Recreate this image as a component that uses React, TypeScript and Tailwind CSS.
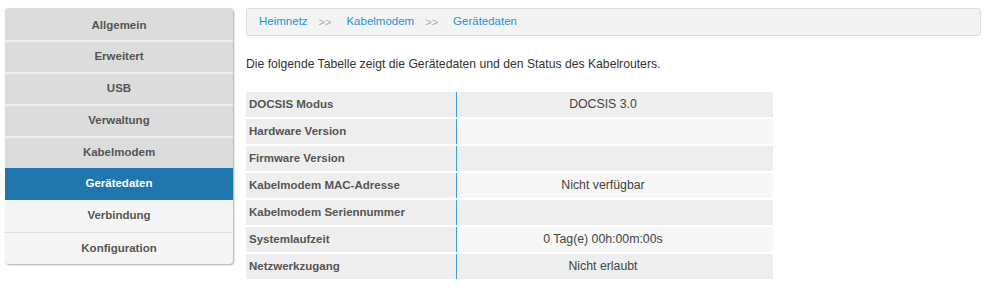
import React from 'react';

const menuItems = [
  { label: 'Allgemein', level: 0 },
  { label: 'Erweitert', level: 0 },
  { label: 'USB', level: 0 },
  { label: 'Verwaltung', level: 0 },
  { label: 'Kabelmodem', level: 0 },
  { label: 'Gerätedaten', level: 1, active: true },
  { label: 'Verbindung', level: 1 },
  { label: 'Konfiguration', level: 1 },
];

const rows = [
  { label: 'DOCSIS Modus', value: 'DOCSIS 3.0' },
  { label: 'Hardware Version', value: '' },
  { label: 'Firmware Version', value: '' },
  { label: 'Kabelmodem MAC-Adresse', value: 'Nicht verfügbar' },
  { label: 'Kabelmodem Seriennummer', value: '' },
  { label: 'Systemlaufzeit', value: '0 Tag(e) 00h:00m:00s' },
  { label: 'Netzwerkzugang', value: 'Nicht erlaubt' },
];

export default function App() {
  return (
    <div
      className="w-[998px] h-[293px] bg-white flex items-start gap-[13px] pl-[5px] pt-[8px] text-[#555]"
      style={{ fontFamily: '"Liberation Sans", Arial, sans-serif' }}
    >
      {/* Sidebar */}
      <aside className="w-[228px] shrink-0 flex flex-col rounded-[4px] overflow-hidden bg-[#dcdcdc] shadow-[1px_1px_2px_rgba(0,0,0,0.35)]">
        {menuItems.map((item, i) => {
          let cls = 'bg-[#dcdcdc] text-[#555]';
          if (item.active) cls = 'bg-[#1f77ad] text-white';
          else if (item.level === 1) cls = 'bg-[#f5f5f5] text-[#555]';
          const sep =
            i === 0
              ? 'pt-[3px]'
              : item.level === 1 && !item.active && menuItems[i - 1].level === 1 && !menuItems[i - 1].active
              ? 'border-t border-[#dedede]'
              : item.level === 0
              ? 'border-t-2 border-[#efefef]'
              : '';
          return (
            <div
              key={item.label}
              className={`h-[32px] flex items-center justify-center text-[11.5px] font-bold ${cls} ${sep}`}
            >
              {item.label}
            </div>
          );
        })}
      </aside>

      {/* Main */}
      <main className="flex-1 pr-[17px]">
        <div className="h-[28px] flex items-center pl-[12px] border border-[#dddddd] rounded-[3px] bg-[#f3f3f3] text-[11.5px]">
          <span className="text-[#2496d3]">Heimnetz</span>
          <span className="text-[#aaaaaa] ml-[11px] mr-[15px] text-[11px]">&gt;&gt;</span>
          <span className="text-[#2496d3]">Kabelmodem</span>
          <span className="text-[#aaaaaa] ml-[11px] mr-[15px] text-[11px]">&gt;&gt;</span>
          <span className="text-[#2496d3]">Gerätedaten</span>
        </div>

        <p className="mt-[20px] text-[12.2px] text-[#333] leading-[16px]">
          Die folgende Tabelle zeigt die Gerätedaten und den Status des Kabelrouters.
        </p>

        <div className="mt-[20px] w-[527px] flex flex-col gap-y-[2px]">
          {rows.map((row, i) => (
            <div key={row.label} className="h-[25px] flex text-[11.5px]">
              <div className="w-[210px] shrink-0 bg-[#eeeeee] flex items-center pl-[3px] font-bold text-[#555]">
                {row.label}
              </div>
              <div className="w-[1px] bg-[#3d9be0]" />
              <div
                className={`flex-1 flex items-center justify-center pr-[24px] text-[12.3px] text-[#444] ${
                  i % 2 === 0 ? 'bg-[#eeeeee]' : 'bg-[#f7f7f7]'
                }`}
              >
                {row.value}
              </div>
            </div>
          ))}
        </div>
      </main>
    </div>
  );
}
